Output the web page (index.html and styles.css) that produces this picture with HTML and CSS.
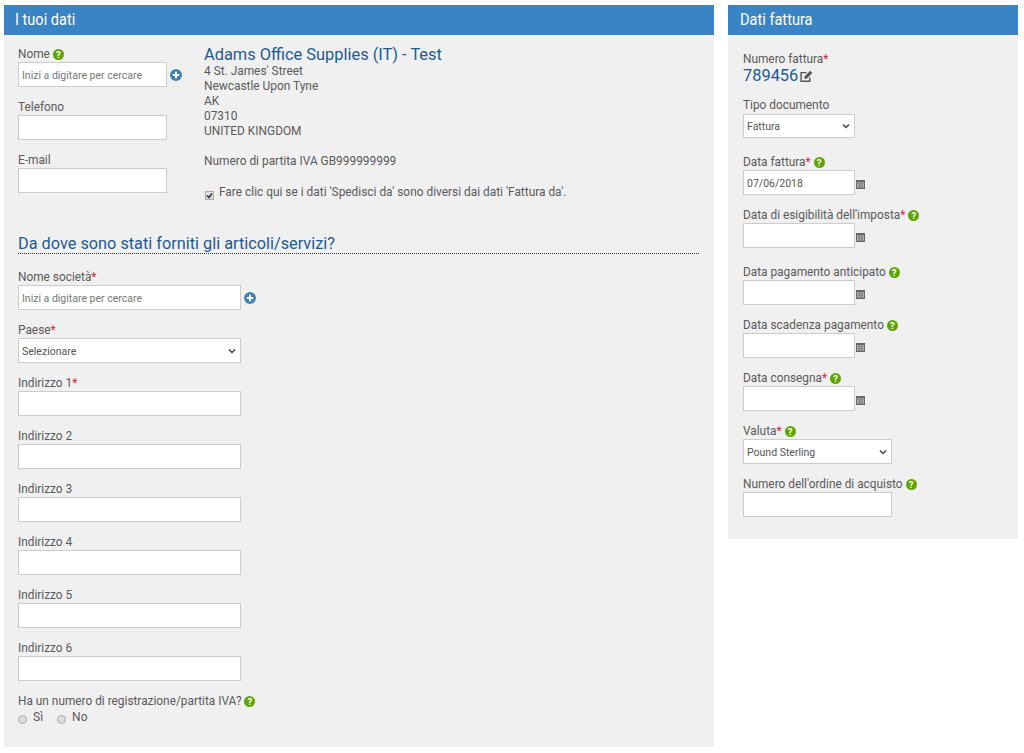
FILE: index.html
```html
<!DOCTYPE html>
<html lang="it">
<head>
    <meta charset="UTF-8">
    <title>Dati fattura</title>
    <link rel="stylesheet" href="styles.css">
</head>
<body>
    <div class="page">
        <div class="panel panel-left">
            <h2 class="panel-title"><span>I tuoi dati</span></h2>
            <div class="panel-body">
                <div class="top-row">
                    <div class="contact">
                        <div class="field">
                            <label class="lbl">Nome <span class="help">?</span></label>
                            <div class="ctl">
                                <input class="inp inp-short" type="text" placeholder="Inizi a digitare per cercare">
                                <svg class="plus" viewBox="0 0 12 12"><circle cx="6" cy="6" r="6" fill="#3f85b8"/><path d="M6 2.800v6.400M2.800 6h6.400" stroke="#fff" stroke-width="2"/></svg>
                            </div>
                        </div>
                        <div class="field">
                            <label class="lbl">Telefono</label>
                            <input class="inp inp-short" type="text">
                        </div>
                        <div class="field">
                            <label class="lbl">E-mail</label>
                            <input class="inp inp-short" type="text">
                        </div>
                    </div>
                    <div class="company">
                        <div class="company-name">Adams Office Supplies (IT) - Test</div>
                        <div>4 St. James' Street</div>
                        <div>Newcastle Upon Tyne</div>
                        <div>AK</div>
                        <div>07310</div>
                        <div>UNITED KINGDOM</div>
                        <div class="vat">Numero di partita IVA GB999999999</div>
                        <label class="check"><input type="checkbox" checked> <span>Fare clic qui se i dati 'Spedisci da' sono diversi dai dati 'Fattura da'.</span></label>
                    </div>
                </div>
                <h3 class="section-title">Da dove sono stati forniti gli articoli/servizi?</h3>
                <div class="field">
                    <label class="lbl">Nome società<span class="req">*</span></label>
                    <div class="ctl">
                        <input class="inp inp-long" type="text" placeholder="Inizi a digitare per cercare">
                        <svg class="plus" viewBox="0 0 12 12"><circle cx="6" cy="6" r="6" fill="#3f85b8"/><path d="M6 2.800v6.400M2.800 6h6.400" stroke="#fff" stroke-width="2"/></svg>
                    </div>
                </div>
                <div class="field">
                    <label class="lbl">Paese<span class="req">*</span></label>
                    <select class="inp inp-long"><option>Selezionare</option></select>
                </div>
                <div class="field">
                    <label class="lbl">Indirizzo 1<span class="req">*</span></label>
                    <input class="inp inp-long" type="text">
                </div>
                <div class="field">
                    <label class="lbl">Indirizzo 2</label>
                    <input class="inp inp-long" type="text">
                </div>
                <div class="field">
                    <label class="lbl">Indirizzo 3</label>
                    <input class="inp inp-long" type="text">
                </div>
                <div class="field">
                    <label class="lbl">Indirizzo 4</label>
                    <input class="inp inp-long" type="text">
                </div>
                <div class="field">
                    <label class="lbl">Indirizzo 5</label>
                    <input class="inp inp-long" type="text">
                </div>
                <div class="field">
                    <label class="lbl">Indirizzo 6</label>
                    <input class="inp inp-long" type="text">
                </div>
                <label class="lbl">Ha un numero di registrazione/partita IVA? <span class="help">?</span></label>
                <div class="radios">
                    <label class="radio"><input type="radio" name="iva"> <span>Sì</span></label>
                    <label class="radio"><input type="radio" name="iva"> <span>No</span></label>
                </div>
            </div>
        </div>
        <div class="panel panel-right">
            <h2 class="panel-title"><span>Dati fattura</span></h2>
            <div class="panel-body panel-body-right">
                <div class="number-block">
                    <label class="lbl">Numero fattura<span class="req">*</span></label>
                    <div class="number">789456<svg class="edit" viewBox="0 0 12 12"><path d="M9 7v3.400H1V2.400h5" fill="none" stroke="#555" stroke-width="1.300"/><path d="M4.400 5.800l5-5 2 2-5 5-2.400.4z" fill="#555"/></svg></div>
                </div>
                <div class="field field-tall">
                    <label class="lbl">Tipo documento</label>
                    <select class="inp inp-date sel-doc"><option>Fattura</option></select>
                </div>
                <div class="field">
                    <label class="lbl">Data fattura<span class="req">*</span> <span class="help">?</span></label>
                    <div class="ctl">
                        <input class="inp inp-date" type="text" value="07/06/2018">
                        <svg class="cal" viewBox="0 0 9 10"><path d="M0 1h9v9H0z" fill="#666"/><path d="M1 3.200h1.800v1.200H1zM3.600 3.200h1.800v1.200H3.600zM6.200 3.200H8v1.200H6.200zM1 5.200h1.800v1.200H1zM3.600 5.200h1.800v1.200H3.600zM6.200 5.200H8v1.200H6.200zM1 7.200h1.800v1.200H1zM3.600 7.200h1.800v1.200H3.600zM6.200 7.200H8v1.200H6.200z" fill="#ccc"/></svg>
                    </div>
                </div>
                <div class="field field-tall">
                    <label class="lbl">Data di esigibilità dell'imposta<span class="req">*</span> <span class="help">?</span></label>
                    <div class="ctl">
                        <input class="inp inp-date" type="text">
                        <svg class="cal" viewBox="0 0 9 10"><path d="M0 1h9v9H0z" fill="#666"/><path d="M1 3.200h1.800v1.200H1zM3.600 3.200h1.800v1.200H3.600zM6.200 3.200H8v1.200H6.200zM1 5.200h1.800v1.200H1zM3.600 5.200h1.800v1.200H3.600zM6.200 5.200H8v1.200H6.200zM1 7.200h1.800v1.200H1zM3.600 7.200h1.800v1.200H3.600zM6.200 7.200H8v1.200H6.200z" fill="#ccc"/></svg>
                    </div>
                </div>
                <div class="field">
                    <label class="lbl">Data pagamento anticipato <span class="help">?</span></label>
                    <div class="ctl">
                        <input class="inp inp-date" type="text">
                        <svg class="cal" viewBox="0 0 9 10"><path d="M0 1h9v9H0z" fill="#666"/><path d="M1 3.200h1.800v1.200H1zM3.600 3.200h1.800v1.200H3.600zM6.200 3.200H8v1.200H6.200zM1 5.200h1.800v1.200H1zM3.600 5.200h1.800v1.200H3.600zM6.200 5.200H8v1.200H6.200zM1 7.200h1.800v1.200H1zM3.600 7.200h1.800v1.200H3.600zM6.200 7.200H8v1.200H6.200z" fill="#ccc"/></svg>
                    </div>
                </div>
                <div class="field">
                    <label class="lbl">Data scadenza pagamento <span class="help">?</span></label>
                    <div class="ctl">
                        <input class="inp inp-date" type="text">
                        <svg class="cal" viewBox="0 0 9 10"><path d="M0 1h9v9H0z" fill="#666"/><path d="M1 3.200h1.800v1.200H1zM3.600 3.200h1.800v1.200H3.600zM6.200 3.200H8v1.200H6.200zM1 5.200h1.800v1.200H1zM3.600 5.200h1.800v1.200H3.600zM6.200 5.200H8v1.200H6.200zM1 7.200h1.800v1.200H1zM3.600 7.200h1.800v1.200H3.600zM6.200 7.200H8v1.200H6.200z" fill="#ccc"/></svg>
                    </div>
                </div>
                <div class="field">
                    <label class="lbl">Data consegna<span class="req">*</span> <span class="help">?</span></label>
                    <div class="ctl">
                        <input class="inp inp-date" type="text">
                        <svg class="cal" viewBox="0 0 9 10"><path d="M0 1h9v9H0z" fill="#666"/><path d="M1 3.200h1.800v1.200H1zM3.600 3.200h1.800v1.200H3.600zM6.200 3.200H8v1.200H6.200zM1 5.200h1.800v1.200H1zM3.600 5.200h1.800v1.200H3.600zM6.200 5.200H8v1.200H6.200zM1 7.200h1.800v1.200H1zM3.600 7.200h1.800v1.200H3.600zM6.200 7.200H8v1.200H6.200z" fill="#ccc"/></svg>
                    </div>
                </div>
                <div class="field">
                    <label class="lbl">Valuta<span class="req">*</span> <span class="help">?</span></label>
                    <select class="inp inp-mid"><option>Pound Sterling</option></select>
                </div>
                <div class="field">
                    <label class="lbl">Numero dell'ordine di acquisto <span class="help">?</span></label>
                    <input class="inp inp-mid" type="text">
                </div>
            </div>
        </div>
    </div>
</body>
</html>
```

FILE: styles.css
```css
* { box-sizing: border-box; margin: 0; padding: 0; }
body { font-family: Roboto, "Liberation Sans", sans-serif; font-size: 11.9px; color: #5a5a5a; background: #fff; }
.page { display: flex; align-items: flex-start; gap: 14px; padding: 5px 6px 0 4px; }
.panel { background: #f0f0f0; }
.panel-left { width: 710px; height: 742px; }
.panel-right { width: 290px; height: 534px; }
.panel-title { height: 30px; line-height: 30px; padding-left: 11px; background: #3a84c5; color: #fff; font-size: 16px; font-weight: 400; }
.panel-title span { display: inline-block; transform: scaleX(.91); transform-origin: 0 0; }
.panel-right .panel-title { padding-left: 12px; }
.panel-body { padding: 9px 14px 0; }
.panel-body-right { padding: 14px 15px 0; }

.top-row { display: flex; height: 188px; }
.contact { width: 186px; }
.company { line-height: 15px; }
.company-name { font-size: 16.4px; line-height: 19px; color: #1c5a96; margin-top: 1px; }
.vat { margin-top: 15px; }
.check { display: flex; align-items: flex-start; margin-top: 16px; }
.check input { appearance: none; width: 9px; height: 9px; margin: 6px 5px 0 1px; border: 1px solid #aaa; background: #ddd url("data:image/svg+xml,%3Csvg xmlns='http://www.w3.org/2000/svg' viewBox='0 0 7 7'%3E%3Cpath d='M1 3.500l2 2 3-4' fill='none' stroke='%23333' stroke-width='1.500'/%3E%3C/svg%3E") center/7px no-repeat; }

.section-title { font-size: 16.3px; font-weight: 400; line-height: 26px; color: #1c5a96; border-bottom: 1px dotted #333; margin-right: 1px; height: 23px; margin-top: -1px; margin-bottom: 13px; }

.field { margin-bottom: 10px; }
.field-tall { margin-bottom: 14px; }
.lbl { display: block; height: 18px; padding-top: 1px; line-height: 18px; font-size: 11.85px; }
.req { color: #d9233f; }
.help { display: inline-block; width: 11px; height: 11px; border-radius: 50%; background: #5fa500; color: #fff; font-size: 9.5px; font-weight: 700; line-height: 11px; text-align: center; vertical-align: 0; }
.ctl { display: flex; align-items: center; gap: 3px; }
.inp { display: block; height: 25px; border: 1px solid #ccc; background: #fff; padding: 1px 3px 0; font-family: inherit; font-size: 10.5px; color: #555; border-radius: 0; }
.inp::placeholder { color: #777; opacity: 1; }
select.inp { appearance: none; background: #fff url("data:image/svg+xml,%3Csvg xmlns='http://www.w3.org/2000/svg' viewBox='0 0 8 6'%3E%3Cpath d='M1 1.500l3 3 3-3' fill='none' stroke='%23444' stroke-width='1.500'/%3E%3C/svg%3E") right 4px center/8px 6px no-repeat; }
.inp-short { width: 149px; }
.inp-long { width: 223px; }
.inp-date { width: 112px; }
.inp-mid { width: 149px; }
.sel-doc { height: 24px; margin-top: 1px; }
.plus { width: 12px; height: 12px; flex: none; }
.cal { width: 9px; height: 10px; flex: none; margin-top: 3px; }
.panel-right .ctl { gap: 0; }
.panel-right .cal { margin-left: 1px; }
.number-block { margin-bottom: 10px; }
.number { display: flex; align-items: center; gap: 2px; font-size: 16.4px; line-height: 18px; color: #1c5a96; }
.edit { width: 13px; height: 13px; }
.radios { display: flex; gap: 14px; height: 18px; }
.radio { display: flex; align-items: flex-start; gap: 6px; line-height: 16px; font-size: 12px; }
.radio input { appearance: none; width: 9px; height: 9px; margin-top: 6px; border: 1px solid #aaa; border-radius: 50%; background: #ddd; }
```
